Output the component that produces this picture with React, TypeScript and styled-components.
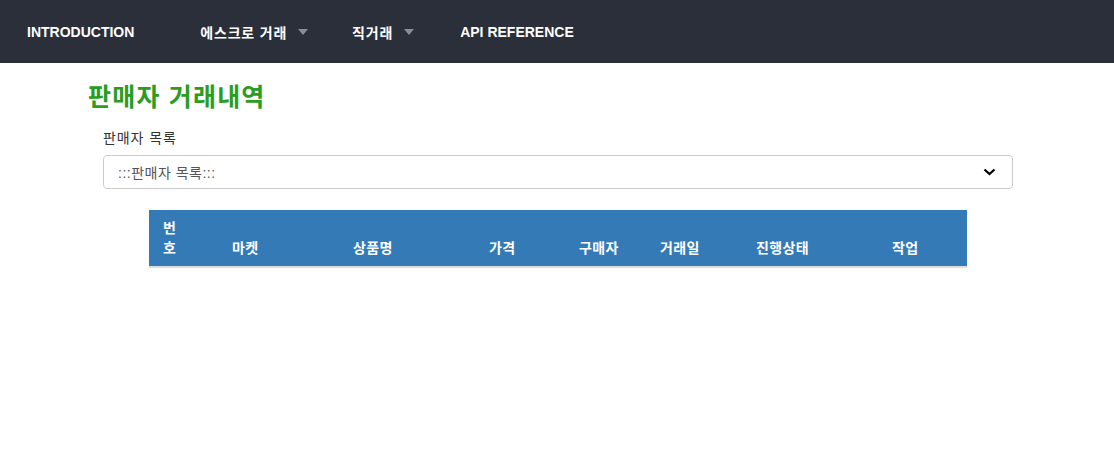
import styled, { createGlobalStyle } from "styled-components";

const GlobalStyle = createGlobalStyle`
  html, body {
    margin: 0;
    padding: 0;
    background: #ffffff;
  }
  body {
    font-family: "Liberation Sans", Arial, "Noto Sans CJK KR", sans-serif;
    font-size: 14px;
    color: #333333;
  }
`;

const NavBar = styled.nav`
  display: flex;
  align-items: center;
  height: 63px;
  padding: 0 0 0 27px;
  background: #2b2f3a;
`;

const NavItem = styled.div<{ $gap: number; $ko?: boolean }>`
  display: flex;
  align-items: center;
  margin-right: ${({ $gap }) => $gap}px;
  color: #ffffff;
  font-size: 14px;
  font-weight: bold;
  letter-spacing: ${({ $ko }) => ($ko ? "0.8px" : "0")};
  white-space: nowrap;
`;

const Caret = styled.span`
  display: inline-block;
  width: 0;
  height: 0;
  margin-left: 11px;
  border-left: 5px solid transparent;
  border-right: 5px solid transparent;
  border-top: 6px solid #8a8d94;
`;

const Main = styled.main`
  padding: 17px 0 0 88px;
`;

const Title = styled.h1`
  margin: 0 0 16px;
  color: #2a9d1e;
  font-size: 25px;
  font-weight: bold;
  line-height: 34px;
  letter-spacing: 1.2px;
`;

const Field = styled.div`
  display: flex;
  flex-direction: column;
  gap: 9px;
  width: 910px;
  margin-left: 15px;
`;

const Label = styled.label`
  font-size: 14px;
  color: #333333;
  line-height: 16px;
  letter-spacing: 0.9px;
`;

const Select = styled.div`
  display: flex;
  align-items: center;
  justify-content: space-between;
  height: 34px;
  box-sizing: border-box;
  padding: 0 16px 0 14px;
  border: 1px solid #cccccc;
  border-radius: 4px;
  color: #555555;
  font-size: 14px;
  letter-spacing: 0.5px;
  background: #ffffff;
`;

const TableWrap = styled.div`
  margin: 21px 0 0 61px;
  width: 818px;
`;

const Table = styled.table`
  width: 100%;
  border-collapse: collapse;
  table-layout: fixed;
`;

const Th = styled.th<{ $w: number }>`
  box-sizing: border-box;
  width: ${({ $w }) => $w}px;
  padding: 8px 4px 8px 14px;
  background: #337ab7;
  color: #ffffff;
  font-size: 14px;
  font-weight: bold;
  line-height: 20px;
  letter-spacing: 0.4px;
  text-align: left;
  vertical-align: bottom;
  border-bottom: 2px solid #dddddd;
  white-space: nowrap;
`;

const columns: { label: string; w: number; narrow?: boolean }[] = [
  { label: "번호", w: 69, narrow: true },
  { label: "마켓", w: 121 },
  { label: "상품명", w: 136 },
  { label: "가격", w: 90 },
  { label: "구매자", w: 81 },
  { label: "거래일", w: 96 },
  { label: "진행상태", w: 136 },
  { label: "작업", w: 89 },
];

export default function App() {
  return (
    <>
      <GlobalStyle />
      <NavBar>
        <NavItem $gap={66}>INTRODUCTION</NavItem>
        <NavItem $gap={44} $ko>
          에스크로 거래
          <Caret />
        </NavItem>
        <NavItem $gap={46} $ko>
          직거래
          <Caret />
        </NavItem>
        <NavItem $gap={0}>API REFERENCE</NavItem>
      </NavBar>
      <Main>
        <Title>판매자 거래내역</Title>
        <Field>
          <Label>판매자 목록</Label>
          <Select>
            <span>:::판매자 목록:::</span>
            <svg width="13" height="8" viewBox="0 0 13 8">
              <path d="M1.5 1.5 L6.5 6 L11.5 1.5" fill="none" stroke="#000" strokeWidth="2.2" />
            </svg>
          </Select>
        </Field>
        <TableWrap>
          <Table>
            <thead>
              <tr>
                {columns.map((c) => (
                  <Th key={c.label} $w={c.w}>
                    {c.narrow ? (
                      <>
                        번
                        <br />호
                      </>
                    ) : (
                      c.label
                    )}
                  </Th>
                ))}
              </tr>
            </thead>
          </Table>
        </TableWrap>
      </Main>
    </>
  );
}
